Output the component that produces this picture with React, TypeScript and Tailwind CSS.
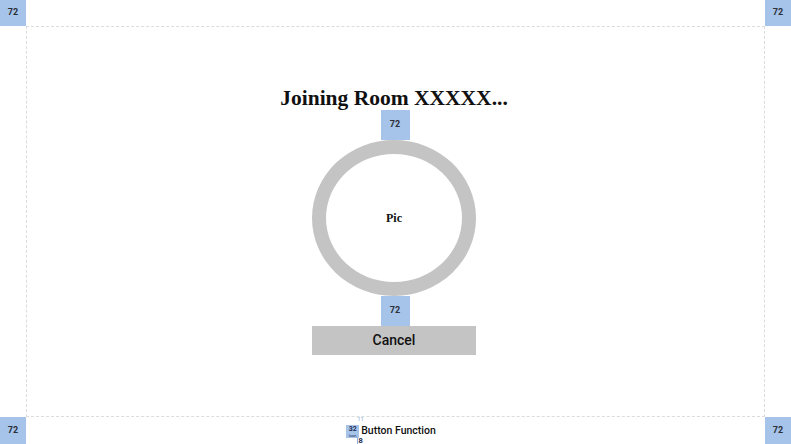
import React from 'react'

const blue = 'bg-[#a6c3ea]'

function Marker({ className = '' }: { className?: string }) {
  return (
    <div
      className={`${blue} flex items-center justify-center text-[9px] font-bold text-[#2b2f38] ${className}`}
      style={{ fontFamily: 'Roboto, "Liberation Sans", sans-serif' }}
    >
      72
    </div>
  )
}

export default function App() {
  return (
    <div
      className="grid h-[444px] w-[791px] grid-cols-[26px_1fr_26px] grid-rows-[26px_1fr_27px] bg-white"
      style={{ fontFamily: 'Roboto, "Liberation Sans", sans-serif' }}
    >
      <Marker className="h-[26px] w-[26px]" />
      <div />
      <Marker className="h-[26px] w-[26px]" />

      <div />
      <div className="flex flex-col items-center border border-dashed border-[#dcdcdc] pr-[3px] pt-[60px]">
        <h1
          className="text-[21.5px] font-bold leading-[23px] text-[#111]"
          style={{ fontFamily: '"Liberation Serif", serif' }}
        >
          Joining Room XXXXX...
        </h1>
        <Marker className="ml-[2px] h-[30px] w-[29px]" />
        <div className="flex h-[156px] w-[164px] items-center justify-center rounded-[50%] border-[14px] border-[#c4c4c4]">
          <span
            className="text-[12px] font-bold text-[#111]"
            style={{ fontFamily: '"Liberation Serif", serif' }}
          >
            Pic
          </span>
        </div>
        <Marker className="ml-[2px] h-[30px] w-[29px]" />
        <button className="flex h-[29px] w-[164px] items-center justify-center bg-[#c4c4c4] text-[14px] font-medium text-[#111]">
          Cancel
        </button>
      </div>
      <div />

      <Marker className="h-[27px] w-[26px] self-end" />
      <div className="flex items-start justify-center pr-[9px] pt-[8px]">
        <div className="flex items-center gap-[2px]">
          <div className={`relative flex h-[13px] w-[13px] flex-col items-center justify-center ${blue} leading-none text-[#1f2f55]`}>
            <span className="text-[7px] font-bold leading-[7px]">32</span>
            <span className="text-[4px] leading-[5px]">Icon</span>
            <span className="absolute -top-[9px] left-[11px] text-[6px] leading-none text-[#8fb0e0]">11</span>
            <span className="absolute left-[11px] top-[12px] h-[7px] w-[1px] bg-[#8fb0e0]" />
            <span className="absolute left-[12px] top-[12px] text-[8px] font-bold leading-none text-[#1f2f55]">8</span>
          </div>
          <span className="text-[10.5px] font-medium leading-none text-[#111]">Button Function</span>
        </div>
      </div>
      <Marker className="h-[27px] w-[26px] self-end" />
    </div>
  )
}
